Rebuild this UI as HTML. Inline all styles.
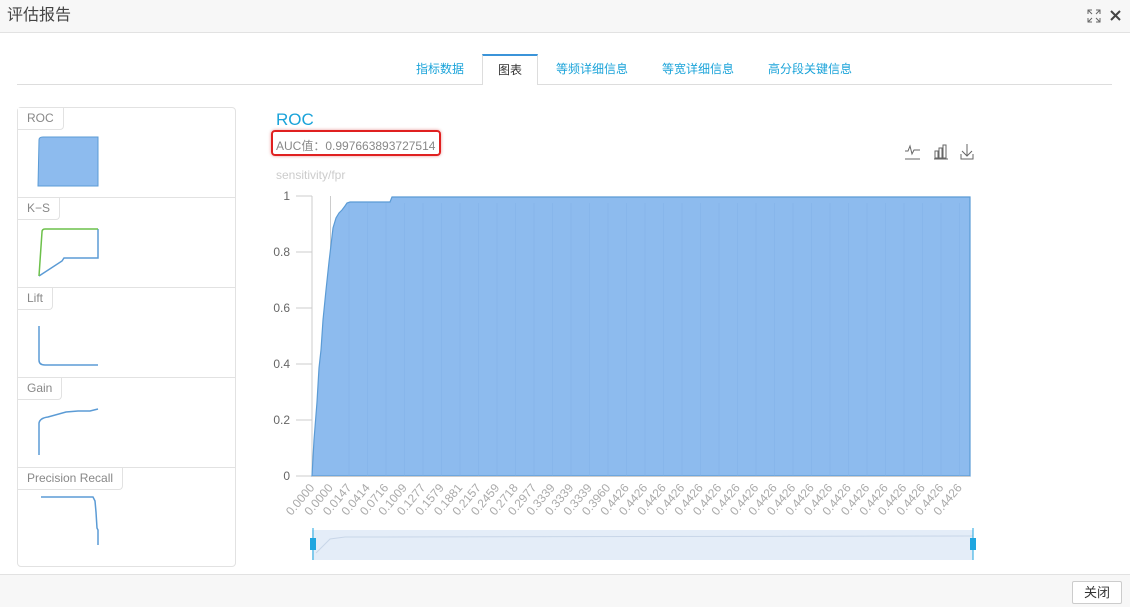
<!DOCTYPE html>
<html><head><meta charset="utf-8"><style>
*{margin:0;padding:0;box-sizing:border-box}
body{width:1130px;height:607px;background:#fff;font-family:"Liberation Sans","Noto Sans CJK SC",sans-serif;position:relative;overflow:hidden}
.hdr{position:absolute;left:0;top:0;width:1130px;height:33px;background:#f7f7f7;border-bottom:1px solid #e2e2e2}
.hdr .t{position:absolute;left:7px;top:6px;font-size:16px;color:#444;line-height:20px}
.ftr{position:absolute;left:0;top:574px;width:1130px;height:33px;background:#f7f7f7;border-top:1px solid #e2e2e2}
.btn{position:absolute;left:1072px;top:6px;width:50px;height:23px;border:1px solid #ccc;border-radius:2px;background:#fff;font-size:13px;color:#333;text-align:center;line-height:21px}
.tabs{position:absolute;left:17px;top:84px;width:1095px;border-top:1px solid #ddd}
.tab{position:absolute;top:60px;font-size:12px;color:#1aa3d9}
.atab{position:absolute;left:482px;top:54px;width:56px;height:31px;border:1px solid #ddd;border-top:2px solid #3b94d9;border-bottom:none;background:#fff;font-size:12px;color:#333;text-align:center;line-height:28px}
.side{position:absolute;left:17px;top:107px;width:219px;height:460px;border:1px solid #e2e2e2;border-radius:4px}
.sec{position:absolute;left:0;width:217px;height:90px;border-bottom:1px solid #e2e2e2}
.lbl{position:absolute;left:0;top:0;height:22px;padding:0 9px;border:1px solid #e2e2e2;border-top:none;border-left:none;border-radius:0 0 4px 0;font-size:12px;color:#888;line-height:21px;background:#fff}
</style></head><body>
<div class="hdr"><div class="t">评估报告</div>
<svg style="position:absolute;left:1087px;top:9px" width="14" height="14" viewBox="0 0 14 14" fill="none" stroke="#666" stroke-width="1"><path d="M1 5V1h4M1 1l4 4M9 1h4v4M13 1l-4 4M1 9v4h4M1 13l4-4M13 9v4H9M13 13l-4-4"/></svg>
<svg style="position:absolute;left:1110px;top:10px" width="11" height="11" viewBox="0 0 11 11" stroke="#444" stroke-width="2"><path d="M1 1l9 9M10 1l-9 9"/></svg>
</div>
<div class="tabs"></div>
<div class="tab" style="left:416px">指标数据</div>
<div class="atab">图表</div>
<div class="tab" style="left:556px">等频详细信息</div>
<div class="tab" style="left:662px">等宽详细信息</div>
<div class="tab" style="left:768px">高分段关键信息</div>

<div class="side">
<div class="sec" style="top:0"><div class="lbl">ROC</div>
<svg style="position:absolute;left:0;top:0" width="217" height="90"><path d="M20 78 L21 32 Q21 29 25 29 L80 29 L80 78Z" fill="#8dbbee" stroke="#5b9bd5" stroke-width="1"/></svg></div>
<div class="sec" style="top:90px"><div class="lbl">K−S</div>
<svg style="position:absolute;left:0;top:0" width="217" height="90"><path d="M21 78 L44 63 L46 60 L80 60 L80 31" fill="none" stroke="#5b9bd5" stroke-width="1.5"/><path d="M21 78 L24 34 Q24 31 27 31 L80 31" fill="none" stroke="#6cc04a" stroke-width="1.5"/></svg></div>
<div class="sec" style="top:180px"><div class="lbl">Lift</div>
<svg style="position:absolute;left:0;top:0" width="217" height="90"><path d="M21 38 L21 72 Q21 77 27 77 L80 77" fill="none" stroke="#5b9bd5" stroke-width="1.5"/></svg></div>
<div class="sec" style="top:270px"><div class="lbl">Gain</div>
<svg style="position:absolute;left:0;top:0" width="217" height="90"><path d="M21 77 L21 45 Q22 40 30 39 L48 34 L60 33 L72 33 L80 31" fill="none" stroke="#5b9bd5" stroke-width="1.5"/></svg></div>
<div class="sec" style="top:360px;border:none"><div class="lbl">Precision Recall</div>
<svg style="position:absolute;left:0;top:0" width="217" height="90"><path d="M23 29 L75 29 L77 33 L78 44 L79 60 L80 62 L80 77" fill="none" stroke="#5b9bd5" stroke-width="1.5"/></svg></div>
</div>

<div style="position:absolute;left:276px;top:110px;font-size:17px;color:#1aa3d9">ROC</div>
<div style="position:absolute;left:271px;top:130px;width:170px;height:26px;border:2px solid #e02020;border-radius:4px;box-shadow:0 0 3px rgba(200,0,0,.4)"></div>
<div style="position:absolute;left:276px;top:137px;font-size:12px;color:#888">AUC值：0.997663893727514</div>
<div style="position:absolute;left:276px;top:168px;font-size:12px;color:#ccc">sensitivity/fpr</div>

<svg style="position:absolute;left:903px;top:143px" width="75" height="18" fill="none" stroke="#666" stroke-width="1">
<path d="M2 8h3l2-5 2 8 2-4h6M2 16h15"/><path d="M32 8h3v7h-3zM36 5h3v10h-3zM40 2h3v13h-3zM31 16h14"/><path d="M64 1v12M59 8l5 5 5-5M58 11v5h12v-5"/></svg>

<svg style="position:absolute;left:0;top:0" width="1130" height="607" font-family="Liberation Sans,sans-serif">
<g font-size="12" fill="#666" text-anchor="end">
<text x="290" y="200">1</text><text x="290" y="256">0.8</text><text x="290" y="312">0.6</text><text x="290" y="368">0.4</text><text x="290" y="424">0.2</text><text x="290" y="480">0</text>
</g>
<g stroke="#ccc"><line x1="296" y1="196" x2="312" y2="196"/><line x1="296" y1="252" x2="312" y2="252"/><line x1="296" y1="308" x2="312" y2="308"/><line x1="296" y1="364" x2="312" y2="364"/><line x1="296" y1="420" x2="312" y2="420"/><line x1="296" y1="476" x2="312" y2="476"/><line x1="312" y1="196" x2="312" y2="476"/><line x1="330.5" y1="196" x2="330.5" y2="476"/></g>
<path d="M312 476 L314 440 L317 402 L319 368 L321 350 L323 320 L326 290 L329 262 L331 245 L333 228 L336 218 L339 213 L342 210 L345 206 L347 203 L350 202 L390 202 L392 197 L970 197 L970 476Z" fill="#8dbbee" stroke="#5b9bd5" stroke-width="1.2"/>
<g stroke="#7fb0e6" stroke-width="1" id="gl"></g>
<line x1="312" y1="476.5" x2="970" y2="476.5" stroke="#ccc"/>
<g font-size="12" fill="#aaa" text-anchor="end" id="xl"></g>
<rect x="312" y="530" width="661" height="30" fill="#e4edf8"/>
<path d="M316 553 L330 539 L345 537 L973 536" fill="none" stroke="#c8d6e8"/>
<line x1="313" y1="528" x2="313" y2="560" stroke="#1fa6e0"/><rect x="310" y="538" width="6" height="12" fill="#1fa6e0"/>
<line x1="973" y1="528" x2="973" y2="560" stroke="#1fa6e0"/><rect x="970" y="538" width="6" height="12" fill="#1fa6e0"/>
</svg>
<script>
var L=["0.0000","0.0000","0.0147","0.0414","0.0716","0.1009","0.1277","0.1579","0.1881","0.2157","0.2459","0.2718","0.2977","0.3339","0.3339","0.3339","0.3960"];
while(L.length<36)L.push("0.4426");
var xl=document.getElementById("xl"),gl=document.getElementById("gl"),ns="http://www.w3.org/2000/svg";
L.forEach(function(s,i){var x=312+i*18.5;var t=document.createElementNS(ns,"text");t.setAttribute("transform","translate("+(x+3)+",488) rotate(-50)");t.textContent=s;xl.appendChild(t);
if(i>1){var l=document.createElementNS(ns,"line");l.setAttribute("x1",x);l.setAttribute("x2",x);l.setAttribute("y1",203);l.setAttribute("y2",476);l.setAttribute("stroke-opacity","0.35");gl.appendChild(l);}});
</script>
<div class="ftr"><div class="btn">关闭</div></div>
</body></html>
